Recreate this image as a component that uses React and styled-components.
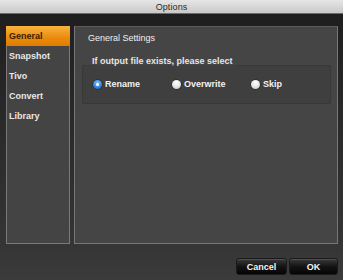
import React from 'react';
import styled, { createGlobalStyle } from 'styled-components';

const GlobalStyle = createGlobalStyle`
  html, body {
    margin: 0;
    padding: 0;
    background: #3a3a3a;
  }
  body {
    font-family: "Liberation Sans", Arial, sans-serif;
  }
`;

const Window = styled.div`
  width: 343px;
  height: 280px;
  display: flex;
  flex-direction: column;
  background: linear-gradient(#1d1d1d 0%, #2a2a2a 45%, #343434 85%, #3b3b3b 100%);
  overflow: hidden;
`;

const TitleBar = styled.div`
  height: 13px;
  flex: none;
  display: flex;
  align-items: center;
  justify-content: center;
  background: linear-gradient(#e6e6e6, #c9c9c9);
  border-bottom: 1px solid #6b6b6b;
  color: #2a2a2a;
  font-size: 9px;
  letter-spacing: 0.1px;
`;

const Body = styled.div`
  display: flex;
  gap: 4px;
  padding: 12px 5px 0 6px;
  height: 218px;
`;

const Sidebar = styled.div`
  width: 62px;
  display: flex;
  flex-direction: column;
  background: #444444;
  border: 1px solid #7a7a7a;
  border-top: none;
`;

const NavItem = styled.div`
  height: 20px;
  display: flex;
  align-items: center;
  font-size: 9px;
  font-weight: bold;
  color: ${p => (p.$active ? '#3a1e00' : '#e8e8e8')};
  background: ${p => (p.$active ? 'linear-gradient(#f9b340, #e98a0c 60%, #e07c00)' : 'transparent')};
  margin: ${p => (p.$active ? '0 -1px' : '0')};
  padding-left: ${p => (p.$active ? '3px' : '2px')};
`;

const Main = styled.div`
  flex: 1;
  display: flex;
  flex-direction: column;
  background: #454545;
  border: 1px solid #777777;
  border-top-color: #5a5a5a;
  padding: 5px 6px 0 7px;
`;

const Heading = styled.div`
  font-size: 9px;
  color: #f0f0f0;
  padding-left: 6px;
  height: 12px;
  line-height: 12px;
`;

const Group = styled.fieldset`
  margin: 12px 0 0 0;
  padding: 0 0 0 10px;
  border: 1px solid #383838;
  border-radius: 2px;
  background: #3f3f3f;
`;

const Legend = styled.legend`
  font-size: 9px;
  font-weight: bold;
  line-height: 10px;
  color: #e6e6e6;
  padding: 0 2px 8px;
  margin-left: -3px;
`;

const Options = styled.div`
  display: flex;
  align-items: center;
  height: 38px;
  margin-top: -9px;
`;

const Option = styled.label`
  width: 79px;
  display: flex;
  align-items: center;
  gap: 3px;
  font-size: 9px;
  font-weight: bold;
  color: #f2f2f2;
`;

const Dot = styled.span`
  width: 9px;
  height: 9px;
  border-radius: 50%;
  flex: none;
  box-sizing: border-box;
  display: flex;
  align-items: center;
  justify-content: center;
  background: ${p => (p.$on
    ? 'radial-gradient(circle at 50% 35%, #8cc8ff, #2a7fe0 60%, #1a5fb8)'
    : 'radial-gradient(circle at 50% 30%, #ffffff, #e4e4e4 55%, #b9b9b9)')};
  box-shadow: 0 0 0 0.5px #222;
  &::after {
    content: '';
    width: 3px;
    height: 3px;
    border-radius: 50%;
    background: ${p => (p.$on ? '#ffffff' : 'transparent')};
  }
`;

const Footer = styled.div`
  flex: 1;
  display: flex;
  justify-content: flex-end;
  align-items: flex-start;
  gap: 2px;
  padding: 14px 5px 0 0;
`;

const Button = styled.button`
  width: ${p => p.$w}px;
  height: 17px;
  padding: 0;
  border: 1px solid #1a1a1a;
  border-radius: 3px;
  background: linear-gradient(#3a3a3a, #141414 50%, #050505);
  color: #f4f4f4;
  font-family: "Liberation Sans", Arial, sans-serif;
  font-size: 9px;
  font-weight: bold;
  box-shadow: inset 0 1px 0 rgba(255, 255, 255, 0.12);
`;

const navItems = ['General', 'Snapshot', 'Tivo', 'Convert', 'Library'];
const choices = ['Rename', 'Overwrite', 'Skip'];

export default function App() {
  return (
    <>
      <GlobalStyle />
      <Window>
        <TitleBar>Options</TitleBar>
        <Body>
          <Sidebar>
            {navItems.map((n, i) => (
              <NavItem key={n} $active={i === 0}>{n}</NavItem>
            ))}
          </Sidebar>
          <Main>
            <Heading>General Settings</Heading>
            <Group>
              <Legend>If output file exists, please select</Legend>
              <Options>
                {choices.map((c, i) => (
                  <Option key={c}>
                    <Dot $on={i === 0} />
                    {c}
                  </Option>
                ))}
              </Options>
            </Group>
          </Main>
        </Body>
        <Footer>
          <Button $w={51}>Cancel</Button>
          <Button $w={49}>OK</Button>
        </Footer>
      </Window>
    </>
  );
}
